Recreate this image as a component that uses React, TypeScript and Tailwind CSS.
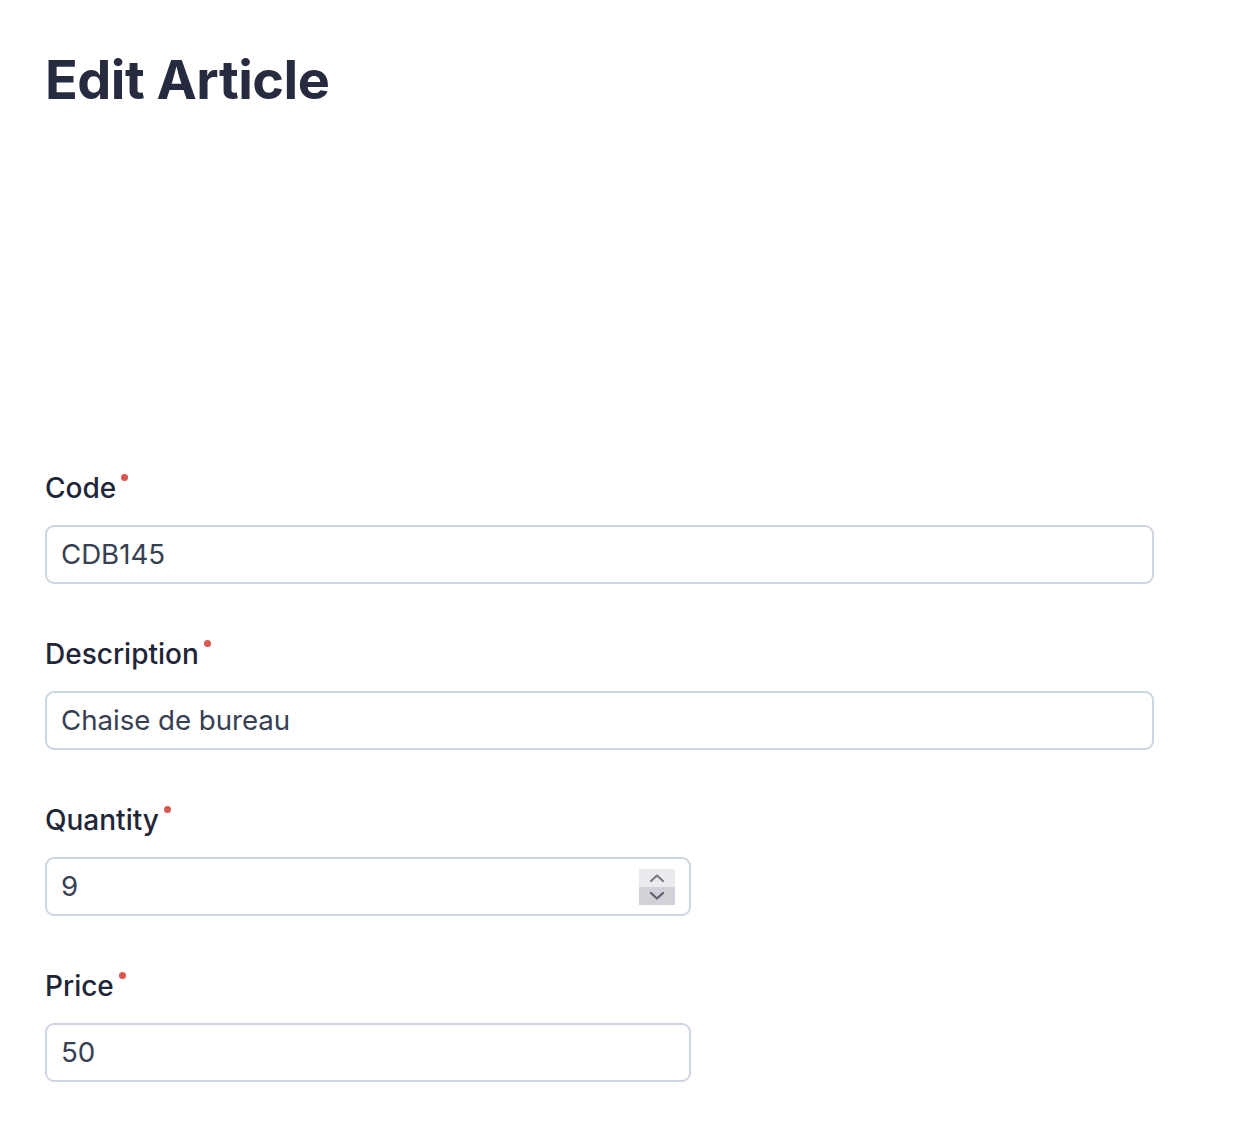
import React from "react";

function Field({ label, value, half, spinner }: { label: string; value: string; half?: boolean; spinner?: boolean }) {
  return (
    <div className="flex flex-col">
      <label className="relative self-start text-[28px] leading-[40px] font-medium text-[#1f2637]">
        {label}
        <span className="absolute -right-[12px] top-[6px] h-[7px] w-[7px] rounded-full bg-[#d9574f]" />
      </label>
      <div
        className={`mt-[17px] flex h-[59px] items-center rounded-[9px] border-2 border-[#cdd5e0] bg-white pl-[14px] pr-[14px] ${
          half ? "w-[646px]" : "w-[1109px]"
        }`}
      >
        <span className="flex-1 text-[27.7px] tracking-[-0.05px] text-[#364052]">{value}</span>
        {spinner && (
          <div className="flex h-[36px] w-[36px] flex-col">
            <div className="flex flex-1 items-center justify-center bg-[#ebeaef]">
              <svg width="16" height="10" viewBox="0 0 16 10" fill="none" stroke="#7a7a85" strokeWidth="2.2" strokeLinecap="round" strokeLinejoin="round">
                <path d="M2 8 L8 2.5 L14 8" />
              </svg>
            </div>
            <div className="flex flex-1 items-center justify-center bg-[#d2d1d8]">
              <svg width="16" height="10" viewBox="0 0 16 10" fill="none" stroke="#5e5e69" strokeWidth="2.2" strokeLinecap="round" strokeLinejoin="round">
                <path d="M2 2 L8 7.5 L14 2" />
              </svg>
            </div>
          </div>
        )}
      </div>
    </div>
  );
}

export default function App() {
  return (
    <main className="min-h-screen bg-white px-[45px] pt-[44px] font-['Inter',sans-serif]">
      <h1 className="text-[54px] leading-[72px] font-bold tracking-[-0.5px] text-[#262b3f]">Edit Article</h1>

      <div className="mt-[352px] flex flex-col gap-[50px]">
        <Field label="Code" value="CDB145" />
        <Field label="Description" value="Chaise de bureau" />
        <Field label="Quantity" value="9" half spinner />
        <Field label="Price" value="50" half />
      </div>
    </main>
  );
}
